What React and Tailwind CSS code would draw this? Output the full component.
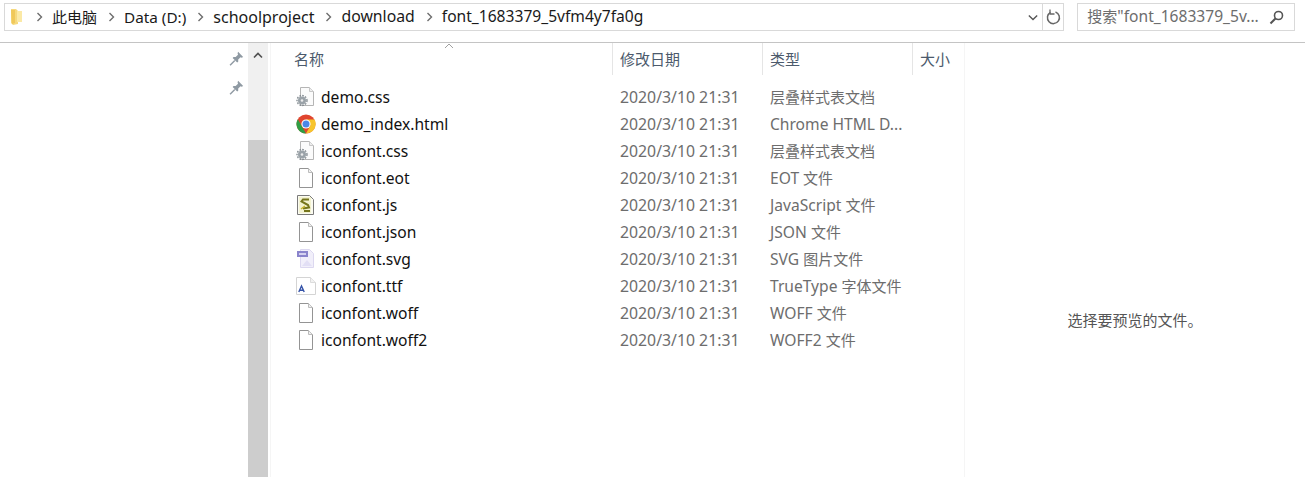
function Sep() {
  return (
    <svg width="7" height="10" viewBox="0 0 7 10" className="shrink-0">
      <path d="M1.5 1 L5.5 5 L1.5 9" fill="none" stroke="#6d6d6d" strokeWidth="1.4" />
    </svg>
  );
}
function Pin() {
  return (
    <svg width="15" height="15" viewBox="0 0 14 14">
      <path d="M8.5 0.8 L13.2 5.5 L11.8 6.2 L10.8 5.8 L8.6 8 L8.6 10 L7.6 10.8 L3.4 6.6 L4.2 5.6 L6.2 5.6 L8.4 3.4 L8 2.2 Z" fill="#8f9aa3" />
      <path d="M5.4 8.8 L1 13.2" stroke="#8f9aa3" strokeWidth="1.3" />
    </svg>
  );
}
function Blank() {
  return (
    <svg width="16" height="20" viewBox="0 0 16 20">
      <path d="M1.5 0.5 H10.5 L14.5 4.5 V19.5 H1.5 Z" fill="#fff" stroke="#949494" />
      <path d="M10.5 0.5 V4.5 H14.5" fill="#f0f0f0" stroke="#bcbcbc" />
    </svg>
  );
}
function Css() {
  return (
    <svg width="20" height="20" viewBox="0 0 20 20">
      <path d="M4.5 0.5 H13.5 L17.5 4.5 V18.5 H4.5 Z" fill="#fbfbfb" stroke="#b5b5b5" />
      <path d="M13.5 0.5 V4.5 H17.5" fill="#eee" stroke="#c8c8c8" />
      <circle cx="6" cy="13.5" r="4" fill="#9aa2a8" />
      <circle cx="6" cy="13.5" r="5" fill="none" stroke="#7f878d" strokeWidth="1.3" strokeDasharray="1.6 1.3" />
      <circle cx="6" cy="13.5" r="1.3" fill="#ececec" />
    </svg>
  );
}
function Chrome() {
  return (
    <svg width="20" height="20" viewBox="0 0 20 20">
      <circle cx="10" cy="10" r="9.5" fill="#e0452f" />
      <path d="M1.8 5.2 L6 12.5 L10 19.5 A9.5 9.5 0 0 1 1.8 5.2 Z" fill="#2f9e44" />
      <path d="M10 19.5 L14.4 11.5 L10 5.6 H18.6 A9.5 9.5 0 0 1 10 19.5 Z" fill="#f7c52c" />
      <circle cx="10" cy="10" r="4.6" fill="#fff" />
      <circle cx="10" cy="10" r="3.5" fill="#4a87e8" />
    </svg>
  );
}
function Js() {
  return (
    <svg width="18" height="20" viewBox="0 0 18 20">
      <path d="M0.5 0.5 H12.5 L16.5 4.5 V19.5 H0.5 Z" fill="#fbfbf0" stroke="#7a7a7a" />
      <rect x="2" y="2" width="12" height="16" fill="#f3f2d0" />
      <path d="M12 4.5 H6 L4.5 6.5 L11 10 L12 12.5 L6 13.5 M7 16 H13" fill="none" stroke="#75751c" strokeWidth="2" />
      <path d="M4 14 L8 11" stroke="#c9b52a" strokeWidth="1.5" />
    </svg>
  );
}
function Svgf() {
  return (
    <svg width="18" height="20" viewBox="0 0 18 20">
      <path d="M3.5 0.5 H12.5 L16.5 4.5 V18.5 H3.5 Z" fill="#f1effa" stroke="#dcd8f0" />
      <rect x="0" y="2" width="11" height="6" fill="#8a84cc" />
      <rect x="2" y="4" width="7" height="2" fill="#d5d2f0" />
      <path d="M5 17 L10 11 L15 17 Z" fill="#e2dff5" />
    </svg>
  );
}
function Ttf() {
  return (
    <svg width="20" height="20" viewBox="0 0 20 20">
      <path d="M0.5 1.5 H14.5 L19.5 6.5 V18.5 H0.5 Z" fill="#fff" stroke="#d4d4d4" />
      <path d="M14.5 1.5 V6.5 H19.5" fill="#f2f2f2" stroke="#dcdcdc" />
      <path d="M2.8 16 L5.5 10 L8.2 16 M3.8 14.2 H7.2" fill="none" stroke="#3553a8" strokeWidth="1.4" />
    </svg>
  );
}
const L = ({ children }) => <span className="text-[15.6px]">{children}</span>;
const files = [
  ["demo.css", Css, [null, "层叠样式表文档"]],
  ["demo_index.html", Chrome, ["Chrome HTML D...", ""]],
  ["iconfont.css", Css, [null, "层叠样式表文档"]],
  ["iconfont.eot", Blank, ["EOT ", "文件"]],
  ["iconfont.js", Js, ["JavaScript ", "文件"]],
  ["iconfont.json", Blank, ["JSON ", "文件"]],
  ["iconfont.svg", Svgf, ["SVG ", "图片文件"]],
  ["iconfont.ttf", Ttf, ["TrueType ", "字体文件"]],
  ["iconfont.woff", Blank, ["WOFF ", "文件"]],
  ["iconfont.woff2", Blank, ["WOFF2 ", "文件"]],
];
export default function App() {
  return (
    <div className="w-[1305px] h-[477px] overflow-hidden bg-white flex flex-col text-[15px] font-['Noto_Sans','Noto_Sans_CJK_SC',sans-serif]">
      <div className="h-[43px] shrink-0 border-b border-[#c4c4c4] flex items-start pt-[3px] pl-[4px] pr-[10px]">
        <div className="w-[1062px] h-[28px] border border-[#d9d9d9] flex items-center">
          <svg width="14" height="18" viewBox="0 0 14 18" className="ml-[5px] shrink-0">
            <path d="M1 1 H6 L8 3 V16 L3 17 L1 15 Z" fill="#f6d97e" />
            <path d="M7 3 H12 V14 H7 Z" fill="#fbe9a6" />
            <path d="M1 2 H5 V15 L2 16 Z" fill="#f0c85a" />
          </svg>
          <div className="ml-[12px]"><Sep /></div>
          <div className="flex items-center text-[#1a1a1a] h-full">
            <span className="ml-[9px]">此电脑</span>
            <span className="ml-[11px]"><Sep /></span>
            <span className="ml-[9px] text-[15.3px]">Data (D:)</span>
            <span className="ml-[11px]"><Sep /></span>
            <span className="ml-[9px] text-[16px]">schoolproject</span>
            <span className="ml-[11px]"><Sep /></span>
            <span className="ml-[9px] text-[15.8px]">download</span>
            <span className="ml-[11px]"><Sep /></span>
            <span className="ml-[9px]"><L>font_1683379_5vfm4y7fa0g</L></span>
          </div>
          <div className="ml-auto flex items-center h-full">
            <svg width="10" height="7" viewBox="0 0 12 8" className="mr-[4px]">
              <path d="M1 1.5 L6 6.5 L11 1.5" fill="none" stroke="#555" strokeWidth="1.6" />
            </svg>
            <div className="w-[21px] h-full border-l border-[#d9d9d9] flex items-center justify-center">
              <svg width="15" height="16" viewBox="0 0 15 16">
                <path d="M9.5 3 A6 6 0 1 1 4.5 3.4" fill="none" stroke="#666" strokeWidth="1.5" />
                <path d="M4 0.5 V5 H8.5" fill="none" stroke="#666" strokeWidth="1.3" />
              </svg>
            </div>
          </div>
        </div>
        <div className="ml-[13px] w-[218px] h-[28px] border border-[#d9d9d9] flex items-center pl-[9px] pr-[10px] text-[#6d6d6d]">
          <span>搜索<L>"font_1683379_5v...</L></span>
          <svg width="15" height="15" viewBox="0 0 15 15" className="ml-auto">
            <circle cx="9.5" cy="5.5" r="4" fill="none" stroke="#555" strokeWidth="1.6" />
            <path d="M6.5 8.5 L1.5 13.5" stroke="#555" strokeWidth="2" />
          </svg>
        </div>
      </div>
      <div className="flex flex-1 min-h-0">
        <div className="w-[248px] shrink-0 flex flex-col items-end pr-[4px] pt-[8px] gap-[14px]">
          <Pin />
          <Pin />
        </div>
        <div className="w-[20px] shrink-0 bg-[#f0f0f0] flex flex-col">
          <div className="h-[97px] flex justify-center pt-[9px]">
            <svg width="10" height="7" viewBox="0 0 10 7">
              <path d="M1 5.5 L5 1.5 L9 5.5" fill="none" stroke="#505050" strokeWidth="1.6" />
            </svg>
          </div>
          <div className="flex-1 bg-[#cdcdcd]" />
        </div>
        <div className="w-[695px] shrink-0 ml-[2px] border-l border-[#f5f5f5] border-r">
          <div className="h-[32px] flex text-[#4c5a6c] relative">
            <div className="w-[342px] pl-[23px] flex items-center border-r border-[#e5e5e5]">名称</div>
            <div className="w-[150px] pl-[7px] flex items-center border-r border-[#e5e5e5]">修改日期</div>
            <div className="w-[150px] pl-[7px] flex items-center border-r border-[#e5e5e5]">类型</div>
            <div className="pl-[7px] flex items-center">大小</div>
            <svg width="10" height="6" viewBox="0 0 10 6" className="absolute left-[173px] top-0">
              <path d="M1 5 L5 1 L9 5" fill="none" stroke="#a0a0a0" />
            </svg>
          </div>
          <div className="pt-[9px]">
            {files.map(([name, Icon, type]) => (
              <div key={name} className="h-[27px] flex items-center">
                <div className="w-[342px] flex items-center">
                  <div className="w-[22px] ml-[24px] h-[20px] flex items-center justify-center"><Icon /></div>
                  <span className="ml-[4px] text-[#111] text-[15.6px]">{name}</span>
                </div>
                <div className="w-[150px] pl-[7px] text-[#6d6d6d] text-[15.8px]">2020/3/10 21:31</div>
                <div className="pl-[7px] text-[#6d6d6d]">{type[0] && <L>{type[0]}</L>}{type[1]}</div>
              </div>
            ))}
          </div>
        </div>
        <div className="flex-1 flex justify-center text-[#555] pt-[266px]">
          <span>选择要预览的文件。</span>
        </div>
      </div>
    </div>
  );
}
